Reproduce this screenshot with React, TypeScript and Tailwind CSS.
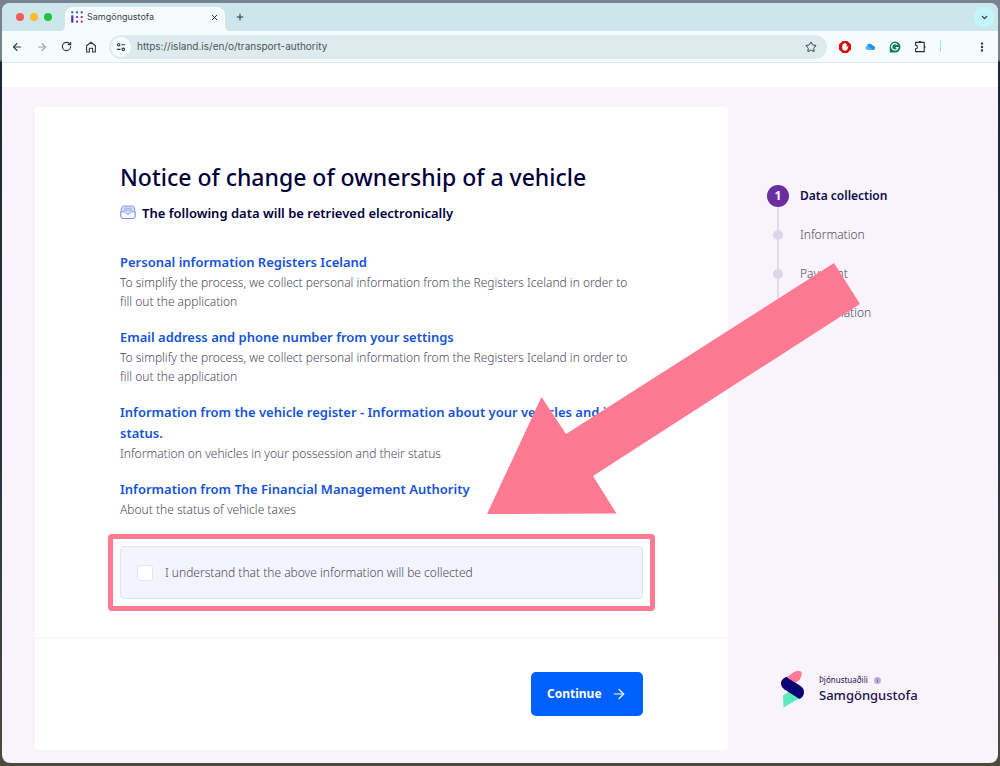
import { useState } from "react";
import { ArrowLeft, ArrowRight, ChevronDown, EllipsisVertical, Plus, RotateCw, Star, X } from "lucide-react";
import type { ReactElement } from "react";

type DataSource = {
  title: string;
  description: string;
};

const dataSources: DataSource[] = [
  {
    title: "Personal information Registers Iceland",
    description:
      "To simplify the process, we collect personal information from the Registers Iceland in order to fill out the application",
  },
  {
    title: "Email address and phone number from your settings",
    description:
      "To simplify the process, we collect personal information from the Registers Iceland in order to fill out the application",
  },
  {
    title: "Information from the vehicle register - Information about your vehicles and its status.",
    description: "Information on vehicles in your possession and their status",
  },
  {
    title: "Information from The Financial Management Authority",
    description: "About the status of vehicle taxes",
  },
];

const steps = ["Data collection", "Information", "Payment", "Confirmation"];

function IslandIsIcon(): ReactElement {
  return (
    <svg className="size-3 shrink-0" viewBox="0 0 12 12">
      <g fill="#2f5be0">
        <rect x="0.2" y="0.2" width="2.2" height="2.2" rx="0.8" />
        <rect x="4.9" y="0.2" width="2.2" height="2.2" rx="0.8" />
      </g>
      <rect x="9.6" y="0.2" width="2.2" height="2.2" rx="0.8" fill="#6a3bbf" />
      <rect x="0.2" y="4.2" width="2.2" height="7.6" rx="0.8" fill="#4b2fb8" />
      <rect x="4.9" y="4.9" width="2.2" height="2.2" rx="0.8" fill="#6a2fa0" />
      <rect x="9.6" y="4.9" width="2.2" height="2.2" rx="0.8" fill="#9a2a90" />
      <rect x="4.9" y="9.6" width="2.2" height="2.2" rx="0.8" fill="#c22a78" />
      <rect x="9.6" y="9.6" width="2.2" height="2.2" rx="0.8" fill="#e0305e" />
    </svg>
  );
}

function TabStrip(): ReactElement {
  return (
    <div className="flex h-7 items-end bg-[#cce6ec]">
      <div className="flex h-7 w-[54px] items-center gap-[6px] pl-[14px]">
        <span className="size-2 rounded-full bg-[#fb5a50]" />
        <span className="size-2 rounded-full bg-[#fdbb2b]" />
        <span className="size-2 rounded-full bg-[#1fc63c]" />
      </div>
      <svg className="ml-1 h-6 w-[5px]" viewBox="0 0 5 24" fill="#f4fcfe">
        <path d="M5 18v6H0c3 0 5-2 5-6Z" />
      </svg>
      <div className="flex h-6 w-[160px] items-center gap-1 rounded-t-lg bg-[#f4fcfe] px-[6px] pb-1 font-['Inter'] text-[9px] text-[#3c4347]">
        <IslandIsIcon />
        <span className="flex-1">Samgöngustofa</span>
        <button type="button" aria-label="Close tab">
          <X className="size-[9px] text-[#222]" strokeWidth={2.5} />
        </button>
      </div>
      <svg className="h-6 w-[5px]" viewBox="0 0 5 24" fill="#f4fcfe">
        <path d="M0 18v6h5c-3 0-5-2-5-6Z" />
      </svg>
      <button type="button" aria-label="New tab" className="flex h-7 w-5 items-center justify-center">
        <Plus className="size-[10px] text-[#2f3b40]" strokeWidth={2.5} />
      </button>
      <button
        type="button"
        aria-label="Search tabs"
        className="mr-1 mb-1 ml-auto flex size-5 items-center justify-center rounded-lg bg-[#c2f5fc]"
      >
        <ChevronDown className="size-[9px] text-[#1f2b30]" strokeWidth={3} />
      </button>
    </div>
  );
}

function Extensions(): ReactElement {
  return (
    <div className="flex items-center gap-[13px]">
      <svg className="size-3" viewBox="0 0 12 12">
        <path d="M3.6 0h4.8L12 3.6v4.8L8.4 12H3.6L0 8.4V3.6Z" fill="#d80d0d" />
        <path
          d="M3.2 4.4v2.4c0 2 1.2 3 2.7 3s2.4-1 2.8-2.3l.7-2-.9-.3-.8 1V3h-.8v-.8h-.8v-.4h-.7v.7h-.8v.5h-.9v1.400Z"
          fill="#fff"
        />
      </svg>
      <svg className="size-3" viewBox="0 0 12 12">
        <path d="M3.4 9A2.2 2.2 0 0 1 3 4.9A3 3 0 0 1 8.6 4.5A2.3 2.3 0 0 1 9.4 9Z" fill="#1f8ff0" />
        <path d="M3.4 9A2.2 2.2 0 0 1 3 4.9Q5 4.8 8 9Z" fill="#55b6fa" />
      </svg>
      <svg className="size-3" viewBox="0 0 12 12">
        <path d="M6 .5A5.5 5.5 0 1 1 6 11.5H.8V6A5.4 5.4 0 0 1 6 .5Z" fill="#12785f" />
        <path d="M8.4 3.9A3.2 3.2 0 1 0 9 6.6H6.7" fill="none" stroke="#fff" strokeWidth="1.3" />
      </svg>
      <svg className="size-[13px]" viewBox="0 0 13 13" fill="none" stroke="#1f2b30" strokeWidth="1.1">
        <path d="M1.6 2.4H10.2V11.6H1.6V8.8a1.8 1.8 0 0 0 0-3.6Z" strokeLinejoin="round" />
        <path d="M4.7 2.4a1.3 1.3 0 0 1 2.6 0ZM10.2 5.7a1.3 1.3 0 0 1 0 2.6Z" fill="#1f2b30" stroke="none" />
      </svg>
      <span className="h-[11px] w-px bg-[#8fe9f7]" />
    </div>
  );
}

function Toolbar(): ReactElement {
  return (
    <div className="flex h-8 items-center border-b border-[#dfe8ea] bg-[#f4fcfe] pr-[10px] pl-[9px] text-[#2f3b40]">
      <div className="flex items-center gap-[13px]">
        <button type="button" aria-label="Back">
          <ArrowLeft className="size-3" strokeWidth={2.2} />
        </button>
        <button type="button" aria-label="Forward">
          <ArrowRight className="size-3 text-[#9aa5a9]" strokeWidth={2.2} />
        </button>
        <button type="button" aria-label="Reload">
          <RotateCw className="size-[11px]" strokeWidth={2.5} />
        </button>
        <button type="button" aria-label="Home">
          <svg
            className="size-3"
            viewBox="0 0 12 12"
            fill="none"
            stroke="currentColor"
            strokeWidth="1.1"
            strokeLinejoin="round"
          >
            <path d="M1.6 4.8 6 1.2l4.4 3.6v6.2H7.6V7.2H4.4V11H1.6Z" />
          </svg>
        </button>
      </div>
      <div className="ml-3 flex h-6 min-w-0 flex-1 items-center rounded-full bg-[#deebee] pr-[10px] pl-[2px]">
        <span className="flex size-5 shrink-0 items-center justify-center rounded-full bg-[#f4fcfe]">
          <svg className="size-[10px]" viewBox="0 0 12 12" fill="none" stroke="#2f3b40" strokeWidth="1.3">
            <circle cx="3.2" cy="3.2" r="1.5" />
            <path d="M6.5 3.2H11M1 8.8h4.5" />
            <circle cx="8.8" cy="8.8" r="1.5" />
          </svg>
        </span>
        <input
          type="text"
          aria-label="Address"
          defaultValue="https://island.is/en/o/transport-authority"
          className="ml-[6px] min-w-0 flex-1 bg-transparent font-['Inter'] text-[10px] text-[#4a5459] outline-none"
        />
        <button type="button" aria-label="Bookmark">
          <Star className="size-3" strokeWidth={2} />
        </button>
      </div>
      <div className="ml-3 flex w-[149px] items-center justify-between">
        <Extensions />
        <button type="button" aria-label="Menu">
          <EllipsisVertical className="size-3" strokeWidth={3} />
        </button>
      </div>
    </div>
  );
}

function InboxIcon(): ReactElement {
  return (
    <svg
      className="size-4 shrink-0"
      viewBox="0 0 16 16"
      fill="none"
      stroke="#7f93f7"
      strokeLinecap="round"
      strokeLinejoin="round"
    >
      <path
        d="M1 7 1.8 2.6A1.8 1.8 0 0 1 3.5 1h9a1.8 1.8 0 0 1 1.7 1.6L15 7v4.5a2 2 0 0 1-2 2H3a2 2 0 0 1-2-2Z"
        fill="#dfe5ff"
      />
      <path
        d="M1 6.8h4.2c.4 0 .5.3.6.7a2.3 2.3 0 0 0 4.4 0c.1-.4.2-.7.6-.7H15v4.7a2 2 0 0 1-2 2H3a2 2 0 0 1-2-2Z"
        fill="#fff"
      />
      <path d="M4.5 3.2h7M4 5h8" strokeWidth="0.8" />
    </svg>
  );
}

function Stepper(): ReactElement {
  return (
    <ol className="text-[12px] font-light text-[#4c4960]">
      {steps.map((step, index) => (
        <li key={step} className="flex h-[39px] gap-[11px]">
          <div className="flex w-[22px] shrink-0 flex-col items-center">
            {index === 0 ? (
              <span className="flex size-[22px] shrink-0 items-center justify-center rounded-full bg-[#6a2ea0] text-[12px] font-bold text-white">
                1
              </span>
            ) : (
              <>
                <span className="h-[6px] w-[2px] bg-[#e1dbeb]" />
                <span className="size-[10px] shrink-0 rounded-full bg-[#ddd5ea]" />
              </>
            )}
            {index < steps.length - 1 && <span className="w-[2px] flex-1 bg-[#e1dbeb]" />}
          </div>
          <span className={index === 0 ? "leading-[22px] font-semibold text-[#0d0c4a]" : "leading-[22px]"}>{step}</span>
        </li>
      ))}
    </ol>
  );
}

function ProviderLogo(): ReactElement {
  return (
    <div className="flex items-center gap-[14px] pl-3">
      <svg className="h-[38px] w-[26px]" viewBox="0 0 26 38">
        <path d="M6.5 8 14.5 2.4Q17 .8 19.5 1L21.5 1.2Q23 1.5 22.8 3.5 22.5 7 20.5 10L16 13Z" fill="#fd7b94" />
        <path d="M4 25.5 18 16.5 21 28 4.5 37.5Z" fill="#5de9bf" />
        <path
          d="M7.5 6.8C4.5 8 2 10.5 2 13.5c0 3.5 2.5 5.5 5.5 7.3L20.5 29c3-1.5 4.5-4 4.5-7 0-3-1.5-5-4.5-6.8L11.5 9.8C9.5 8.7 8.5 8 7.5 6.8Z"
          fill="#0b0573"
        />
      </svg>
      <div className="text-[#22104f]">
        <p className="flex items-center gap-[6px] text-[8px] leading-3">
          Þjónustuaðili
          <svg className="size-[7px]" viewBox="0 0 8 8">
            <circle cx="4" cy="4" r="4" fill="#bfaedb" />
            <path d="M4 1.8v1M4 3.7v2.5" stroke="#6e4aa5" strokeWidth="1" />
          </svg>
        </p>
        <p className="text-[13px] leading-[18px] font-medium">Samgöngustofa</p>
      </div>
    </div>
  );
}

function DataCollectionForm(): ReactElement {
  const [accepted, setAccepted] = useState(false);

  return (
    <form
      className="min-w-0 flex-1 rounded bg-white"
      onSubmit={(e) => {
        e.preventDefault();
      }}
    >
      <div className="px-[85px] pt-[54px] pb-[26px]">
        <h1 className="text-[23px] leading-8 font-medium text-[#00003c]">Notice of change of ownership of a vehicle</h1>
        <h2 className="mt-[9px] flex items-center gap-[6px] text-[13px] leading-[22px] font-semibold text-[#00003c]">
          <InboxIcon />
          The following data will be retrieved electronically
        </h2>

        <ul className="mt-7 space-y-4 pr-1">
          {dataSources.map((source) => (
            <li key={source.title}>
              <h3 className="text-[13px] leading-[21px] font-semibold text-[#1553d6]">{source.title}</h3>
              <p className="text-[12px] leading-[19px] font-light text-[#4c4960]">{source.description}</p>
            </li>
          ))}
        </ul>

        <div className="-mx-3 mt-[15px] rounded border-[5px] border-[#fe7a93] p-[7px]">
          <label className="flex h-[53px] items-center gap-3 rounded border border-[#dde4f8] bg-[#f2f4ff] px-4 text-[12px] font-light text-[#4c4960]">
            <input
              type="checkbox"
              checked={accepted}
              onChange={(e) => {
                setAccepted(e.target.checked);
              }}
              className="size-4 appearance-none rounded-[3px] border border-[#dde4f8] bg-white checked:bg-[#0061ff]"
            />
            I understand that the above information will be collected
          </label>
        </div>
      </div>

      <div className="flex justify-end border-t border-[#f3f0f7] px-[85px] py-[34px]">
        <button
          type="submit"
          className="flex h-[44px] w-[112px] items-center justify-between rounded-[5px] bg-[#0061ff] px-4 text-[12px] font-bold text-white"
        >
          Continue
          <ArrowRight className="size-4" strokeWidth={1.8} />
        </button>
      </div>
    </form>
  );
}

export default function App(): ReactElement {
  return (
    <div className="relative flex min-h-screen flex-col bg-[linear-gradient(to_bottom,#76828f_0px,#76828f_60px,#1d2733_62px,#2a3440_60%,#4d4a3e_100%)] px-[2px] pt-[3px] pb-[3px] font-['Noto_Sans',sans-serif]">
      <div className="flex flex-1 flex-col overflow-hidden rounded-lg bg-[#f9f4fb]">
        <TabStrip />
        <Toolbar />
        <div className="h-6 bg-white" />
        <main className="flex flex-1 pt-5 pr-8 pb-[13px] pl-[33px]">
          <DataCollectionForm />
          <aside className="flex w-[238px] shrink-0 flex-col justify-between pt-[78px] pb-[42px] pl-[39px]">
            <Stepper />
            <ProviderLogo />
          </aside>
        </main>
      </div>

      {/* pointer to the consent checkbox */}
      <svg
        className="pointer-events-none absolute top-[263px] left-[487px] h-[252px] w-[374px]"
        viewBox="0 0 374 252"
        fill="#fe7a93"
      >
        <path d="M0 251 54.5 134 79 171 347 0 373 41 106 213 129.5 250.5Z" />
      </svg>
    </div>
  );
}
